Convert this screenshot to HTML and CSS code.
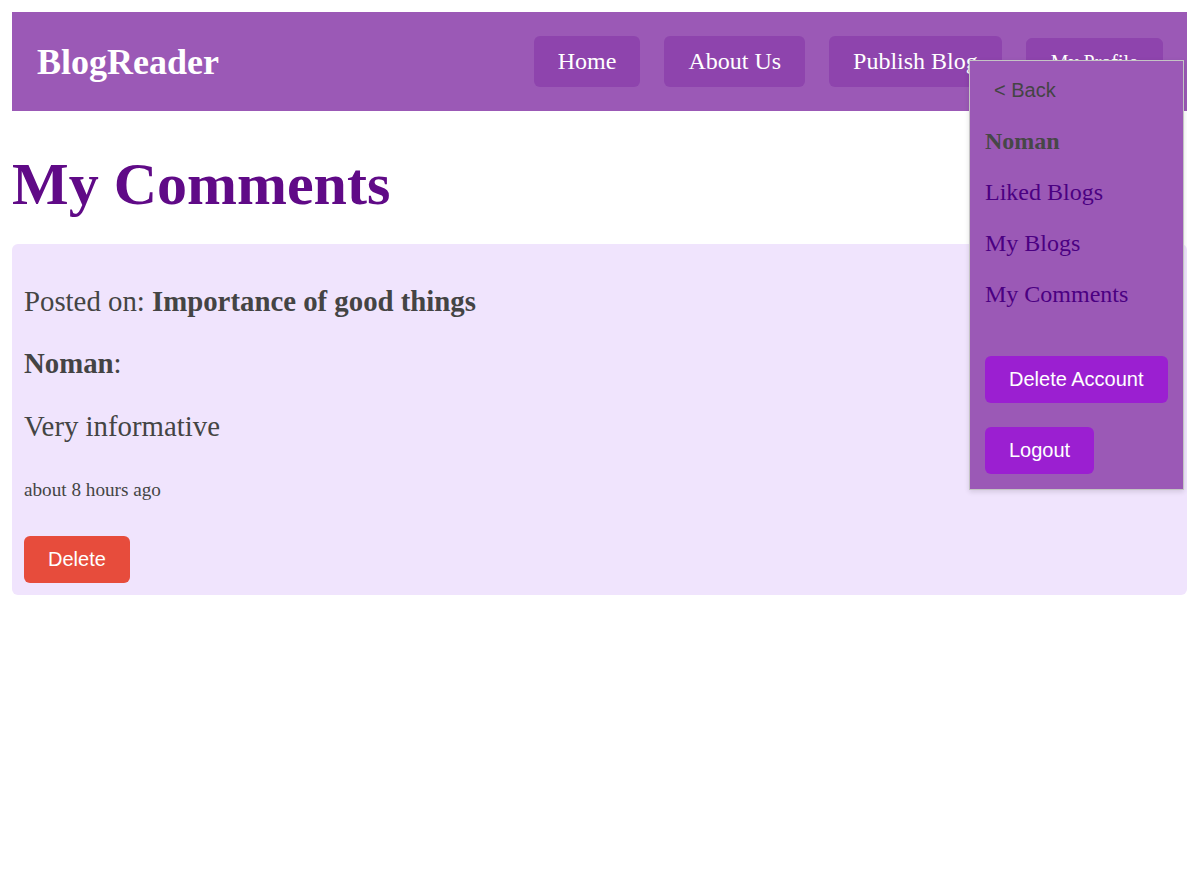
FILE: index.html
```html
<!DOCTYPE html>
<html lang="en">
<head>
<meta charset="utf-8">
<title>BlogReader - My Comments</title>
<link rel="stylesheet" href="styles.css">
</head>
<body>
<header class="topbar">
  <div class="logo">BlogReader</div>
  <nav class="nav">
    <a class="nav-link" href="#">Home</a>
    <a class="nav-link" href="#">About Us</a>
    <a class="nav-link" href="#">Publish Blog</a>
    <button class="nav-btn" type="button">My Profile</button>
  </nav>
  <div class="profile-menu">
    <button class="back-btn" type="button">&lt; Back</button>
    <div class="menu-list">
      <div class="menu-user">Noman</div>
      <a class="menu-link" href="#">Liked Blogs</a>
      <a class="menu-link" href="#">My Blogs</a>
      <a class="menu-link" href="#">My Comments</a>
    </div>
    <div class="menu-actions">
      <button class="menu-btn" type="button">Delete Account</button>
      <button class="menu-btn" type="button">Logout</button>
    </div>
  </div>
</header>

<main>
  <h1 class="page-title">My Comments</h1>
  <section class="comment-card">
    <p class="comment-line">Posted on: <strong>Importance of good things</strong></p>
    <p class="comment-line"><strong>Noman</strong>:</p>
    <p class="comment-line">Very informative</p>
    <p class="comment-time">about 8 hours ago</p>
    <button class="delete-btn" type="button">Delete</button>
  </section>
</main>
</body>
</html>
```

FILE: styles.css
```css
* { box-sizing: border-box; }

body {
  margin: 12px;
  font-family: "Liberation Serif", "Times New Roman", serif;
  background: #ffffff;
  color: #444444;
}

.topbar {
  position: relative;
  display: flex;
  align-items: center;
  justify-content: space-between;
  background: #9b59b6;
  padding: 24px 24px 24px 25px;
  height: 99px;
}

.logo {
  font-size: 36px;
  font-weight: bold;
  color: #ffffff;
}

.nav {
  display: flex;
  align-items: center;
  gap: 24px;
}

.nav-link {
  display: block;
  background: #8e44ad;
  color: #ffffff;
  text-decoration: none;
  font-size: 24px;
  padding: 12px 24px;
  border-radius: 6px;
}

.nav-btn {
  background: #8e44ad;
  color: #ffffff;
  border: 1px solid #8e44ad;
  font-family: "Liberation Serif", "Times New Roman", serif;
  font-size: 20px;
  line-height: 23px;
  padding: 12px 24px;
  border-radius: 6px;
  margin-top: 2px;
}

.profile-menu {
  position: absolute;
  top: 48px;
  right: 3px;
  width: 215px;
  background: #9b59b6;
  border: 1px solid #c4c4c4;
  box-shadow: 0 2px 5px rgba(0, 0, 0, 0.12);
  padding: 0 15px 15px 15px;
  display: flex;
  flex-direction: column;
}

.back-btn {
  align-self: flex-start;
  background: none;
  border: none;
  padding: 0 0 0 9px;
  margin-top: 18px;
  font-family: "Liberation Sans", Arial, sans-serif;
  font-size: 20px;
  line-height: 23px;
  color: #444444;
  text-align: left;
}

.menu-list {
  display: flex;
  flex-direction: column;
  gap: 23.5px;
  margin-top: 26px;
}

.menu-user {
  font-size: 24px;
  font-weight: bold;
  color: #474747;
  line-height: 27.6px;
}

.menu-link {
  font-size: 24px;
  color: #4b0082;
  text-decoration: none;
  line-height: 27.6px;
}

.menu-actions {
  display: flex;
  flex-direction: column;
  align-items: flex-start;
  gap: 24px;
  margin-top: 47.5px;
}

.menu-btn {
  background: #9b1fd1;
  color: #ffffff;
  border: none;
  border-radius: 6px;
  font-family: "Liberation Sans", Arial, sans-serif;
  font-size: 20px;
  line-height: 23px;
  padding: 12px 24px;
}

.page-title {
  font-size: 60px;
  font-weight: bold;
  color: #600a87;
  margin: 39px 0 25px 0;
  line-height: normal;
}

.comment-card {
  background: #f0e4fd;
  border-radius: 6px;
  padding: 12px;
}

.comment-line {
  font-size: 28.8px;
  margin: 28.8px 0;
  color: #444444;
}

.comment-line + .comment-line + .comment-line {
  margin-top: 30px;
}

.comment-time {
  font-size: 19.2px;
  margin: 36px 0 35px 0;
  color: #444444;
}

.delete-btn {
  display: block;
  background: #e74c3c;
  color: #ffffff;
  border: none;
  border-radius: 6px;
  font-family: "Liberation Sans", Arial, sans-serif;
  font-size: 20px;
  line-height: 23px;
  padding: 12px 24px;
}
```
